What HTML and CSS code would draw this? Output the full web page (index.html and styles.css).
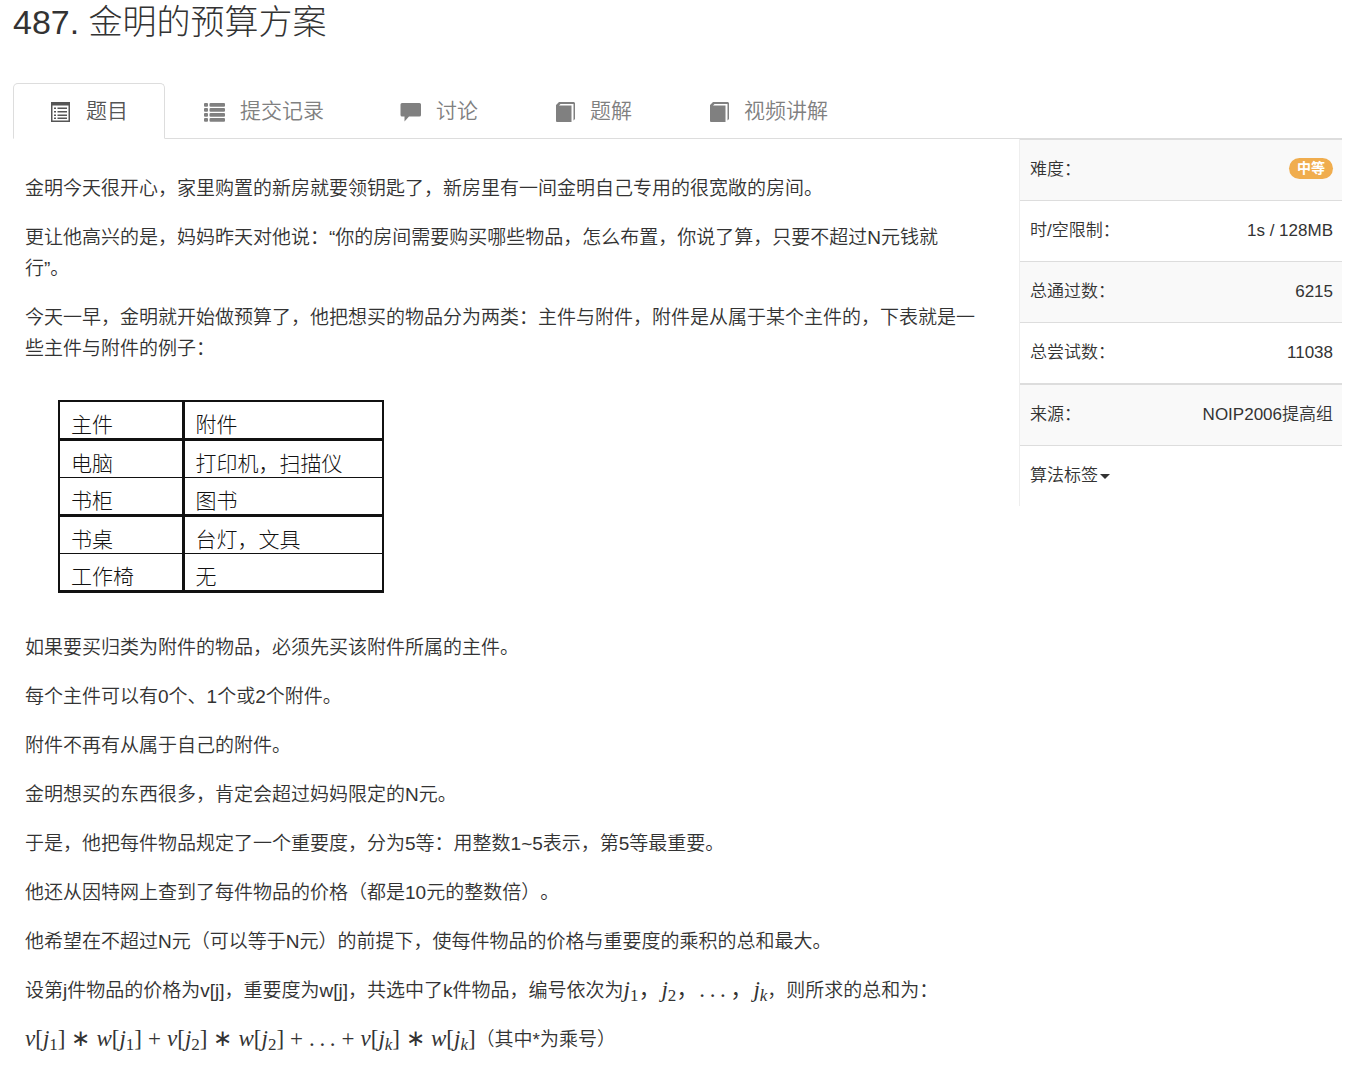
FILE: index.html
```html
<!DOCTYPE html>
<html lang="zh-CN">
<head>
  <meta charset="UTF-8">
  <title>487. 金明的预算方案</title>
  <meta name="viewport" content="width=device-width, initial-scale=1">
  <link rel="stylesheet" href="styles.css">
</head>
<body>
<svg class="sprite" aria-hidden="true">
  <symbol id="icon-list-alt" viewBox="0 0 21 21">
    <path fill-rule="evenodd" d="M1 1h19v20H1zM2.500 4.500v15h16v-15z"/>
    <path d="M4 6.500h2v1.600H4zM4 10h2v1.600H4zM4 13.500h2v1.600H4zM4 16.500h2v1.600H4zM7.500 6.500H17v1.600H7.500zM7.500 10H17v1.600H7.500zM7.500 13.500H17v1.600H7.500zM7.500 16.500H17v1.600H7.500z"/>
  </symbol>
  <symbol id="icon-list" viewBox="0 0 21 21">
    <rect x="0" y="2" width="4" height="3.800" rx="1"/>
    <rect x="0" y="7" width="4" height="3.800" rx="1"/>
    <rect x="0" y="12" width="4" height="3.800" rx="1"/>
    <rect x="0" y="17" width="4" height="3.800" rx="1"/>
    <rect x="5.500" y="2" width="15.500" height="3.800" rx="1"/>
    <rect x="5.500" y="7" width="15.500" height="3.800" rx="1"/>
    <rect x="5.500" y="12" width="15.500" height="3.800" rx="1"/>
    <rect x="5.500" y="17" width="15.500" height="3.800" rx="1"/>
  </symbol>
  <symbol id="icon-comment" viewBox="0 0 21 21">
    <path d="M2 2h17.500a1.500 1.500 0 0 1 1.500 1.500v10.500a1.500 1.500 0 0 1-1.500 1.500H9L4.500 20.500v-5H2A1.500 1.500 0 0 1 .5 14V3.500A1.500 1.500 0 0 1 2 2z"/>
  </symbol>
  <symbol id="icon-book" viewBox="0 0 21 21">
    <path d="M5 1h15l1 1v16l-1.500 1.500V3H6.500L5 4.500H17.500V21H3a1 1 0 0 1-1-1V4z"/>
  </symbol>
</svg>

<h1>487. 金明的预算方案</h1>

<ul class="tabs">
  <li><a class="active" href="#"><svg class="icon"><use href="#icon-list-alt"/></svg>题目</a></li>
  <li><a href="#"><svg class="icon"><use href="#icon-list"/></svg>提交记录</a></li>
  <li><a href="#"><svg class="icon"><use href="#icon-comment"/></svg>讨论</a></li>
  <li><a href="#"><svg class="icon"><use href="#icon-book"/></svg>题解</a></li>
  <li><a href="#"><svg class="icon"><use href="#icon-book"/></svg>视频讲解</a></li>
</ul>

<div class="problem">
  <div class="content">
    <p>金明今天很开心，家里购置的新房就要领钥匙了，新房里有一间金明自己专用的很宽敞的房间。</p>
    <p>更让他高兴的是，妈妈昨天对他说：“你的房间需要购买哪些物品，怎么布置，你说了算，只要不超过N元钱就行”。</p>
    <p>今天一早，金明就开始做预算了，他把想买的物品分为两类：主件与附件，附件是从属于某个主件的，下表就是一些主件与附件的例子：</p>

    <table class="items">
      <tr><th>主件</th><th>附件</th></tr>
      <tr><td>电脑</td><td>打印机，扫描仪</td></tr>
      <tr><td>书柜</td><td>图书</td></tr>
      <tr><td>书桌</td><td>台灯，文具</td></tr>
      <tr><td>工作椅</td><td>无</td></tr>
    </table>

    <p>如果要买归类为附件的物品，必须先买该附件所属的主件。</p>
    <p>每个主件可以有0个、1个或2个附件。</p>
    <p>附件不再有从属于自己的附件。</p>
    <p>金明想买的东西很多，肯定会超过妈妈限定的N元。</p>
    <p>于是，他把每件物品规定了一个重要度，分为5等：用整数1~5表示，第5等最重要。</p>
    <p>他还从因特网上查到了每件物品的价格（都是10元的整数倍）。</p>
    <p>他希望在不超过N元（可以等于N元）的前提下，使每件物品的价格与重要度的乘积的总和最大。</p>
    <p>设第j件物品的价格为v[j]，重要度为w[j]，共选中了k件物品，编号依次为<span class="math"><i>j</i><sub>1</sub>，<i>j</i><sub>2</sub>，.&thinsp;.&thinsp;.&thinsp;，<i>j</i><sub><i>k</i></sub></span>，则所求的总和为：</p>
    <p><span class="math"><i>v</i>[<i>j</i><sub>1</sub>]<span class="op">∗</span><i>w</i>[<i>j</i><sub>1</sub>]<span class="op">+</span><i>v</i>[<i>j</i><sub>2</sub>]<span class="op">∗</span><i>w</i>[<i>j</i><sub>2</sub>]<span class="op">+</span>.&thinsp;.&thinsp;.<span class="op">+</span><i>v</i>[<i>j</i><sub><i>k</i></sub>]<span class="op">∗</span><i>w</i>[<i>j</i><sub><i>k</i></sub>]</span>（其中*为乘号）</p>
  </div>

  <table class="info">
    <tbody>
      <tr><th>难度：</th><td><span class="label">中等</span></td></tr>
      <tr><th>时/空限制：</th><td>1s / 128MB</td></tr>
      <tr><th>总通过数：</th><td>6215</td></tr>
      <tr><th>总尝试数：</th><td>11038</td></tr>
    </tbody>
    <tbody>
      <tr><th>来源：</th><td>NOIP2006提高组</td></tr>
      <tr><th colspan="2"><button class="toggle" type="button">算法标签<span class="caret"></span></button></th></tr>
    </tbody>
  </table>
</div>
</body>
</html>
```

FILE: styles.css
```css
* {
  box-sizing: border-box;
}

body {
  margin: 0;
  padding: 0 8px 0 13px;
  font-family: "Liberation Sans", "Noto Sans CJK SC", sans-serif;
  font-size: 17px;
  font-weight: 350;
  line-height: 24px;
  text-spacing-trim: space-all;
  color: #333;
  background: #fff;
}

h1 {
  margin: 0 0 39px;
  font-size: 34px;
  font-weight: 300;
  line-height: 44px;
}

.sprite {
  display: none;
}

/* tabs */
.tabs {
  display: flex;
  gap: 2px;
  margin: 0;
  padding: 0;
  list-style: none;
  border-bottom: 1px solid #ddd;
}

.tabs a {
  display: flex;
  align-items: center;
  gap: 15px;
  height: 56px;
  margin-bottom: -1px;
  padding: 0 36px;
  border: 1px solid transparent;
  border-radius: 5px 5px 0 0;
  font-size: 21px;
  color: #808080;
  text-decoration: none;
}

.tabs .active {
  color: #555;
  background: #fff;
  border-color: #ddd;
  border-bottom-color: #fff;
}

.icon {
  width: 21px;
  height: 21px;
  fill: currentColor;
}

.problem {
  display: flex;
  align-items: flex-start;
}

/* statement */
.content {
  flex: 1;
  padding: 34px 40px 0 12px;
  font-size: 19px;
  line-height: 31px;
}

.content p {
  margin: 0 0 18px;
}

.content p:last-child {
  margin: 0;
}

.items {
  margin: 36px 0 39px 33px;
  border-collapse: collapse;
  border: 2px solid #111;
  font-size: 21px;
  line-height: 26px;
  color: #111;
}

.items th,
.items td {
  padding: 10px 12px 0 11px;
  border-top: 1px solid #111;
  font-weight: 300;
  text-align: left;
}

.items th:first-child,
.items td:first-child {
  width: 124px;
  border-right: 3px solid #111;
}

.items td:last-child {
  width: 200px;
}

.items tr:nth-child(even) > * {
  border-top: 3px solid #111;
}

.items tr:last-child > * {
  border-bottom: 3px solid #111;
}

.math {
  font-family: "Liberation Serif", "Noto Sans CJK SC", serif;
  font-size: 23px;
  line-height: 24px;
}

.math sub {
  font-size: 17px;
  line-height: 0;
  vertical-align: -4px;
}

.op {
  padding: 0 6px;
}

/* side table */
.info {
  width: 24.3%;
  border-collapse: separate;
  border-spacing: 0;
  border-left: 1px solid #eee;
}

.info th,
.info td {
  padding: 18px 9px 18px 10px;
  border-top: 1px solid #ddd;
  font-weight: inherit;
  text-align: left;
}

.info td {
  text-align: right;
}

.info tbody + tbody tr:first-child > * {
  border-top-width: 2px;
}

.info tr:nth-child(odd) {
  background: #f9f9f9;
}

.label {
  display: inline-block;
  padding: 0 8px;
  border-radius: 11px;
  font-size: 14px;
  font-weight: 700;
  line-height: 21px;
  vertical-align: top;
  color: #fff;
  background: #f0ad4e;
}

.toggle {
  display: flex;
  align-items: center;
  gap: 2px;
  padding: 0;
  border: 0;
  font: inherit;
  color: inherit;
  background: none;
}

.caret {
  border-top: 5px solid;
  border-left: 5px solid transparent;
  border-right: 5px solid transparent;
}
```
